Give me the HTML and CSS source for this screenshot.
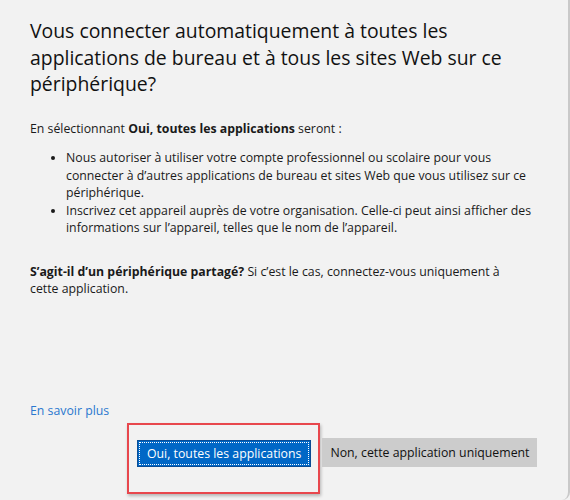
FILE: index.html
```html
<!doctype html>
<html lang="fr">

<head>
    <meta charset="utf-8">
    <meta name="viewport" content="width=device-width, initial-scale=1">
    <title>Connexion automatique</title>
    <link rel="stylesheet" href="styles.css">
</head>

<body>
    <div class="dialog">
        <h1 class="title">Vous connecter automatiquement à toutes les<br>applications de bureau et à tous les sites Web sur ce<br>périphérique?</h1>

        <p class="intro">En sélectionnant <b>Oui, toutes les applications</b> seront :</p>

        <ul class="points">
            <li>Nous autoriser à utiliser votre compte professionnel ou scolaire pour vous<br>connecter à d’autres applications de bureau et sites Web que vous utilisez sur ce<br>périphérique.</li>
            <li>Inscrivez cet appareil auprès de votre organisation. Celle-ci peut ainsi afficher des<br>informations sur l’appareil, telles que le nom de l’appareil.</li>
        </ul>

        <p class="shared"><b>S’agit-il d’un périphérique partagé?</b> Si c’est le cas, connectez-vous uniquement à<br>cette application.</p>

        <div class="spacer"></div>

        <a class="more" href="#">En savoir plus</a>

        <div class="actions">
            <div class="highlight">
                <button type="button" class="btn primary"><span class="focus">Oui, toutes les applications</span></button>
            </div>
            <button type="button" class="btn secondary">Non, cette application uniquement</button>
        </div>
    </div>
</body>

</html>
```
FILE: styles.css
```css
html, body {
    margin: 0;
    height: 100%;
}

body {
    background-color: #f2f2f2;
    font-family: "Open Sans", "Noto Sans", sans-serif;
    color: #1a1a1a;
}

.dialog {
    box-sizing: border-box;
    height: 500px;
    padding: 18px 0 0 30px;
    display: flex;
    flex-direction: column;
    border-right: 2px solid #c9c9c9;
    border-bottom-right-radius: 8px;
}

.title {
    margin: 0;
    font-size: 19.4px;
    font-weight: 400;
    line-height: 26.5px;
    color: #111;
    white-space: nowrap;
}

.intro,
.points,
.shared {
    font-size: 12.3px;
    line-height: 17.5px;
    white-space: nowrap;
}

.intro {
    margin: 22px 0 0 0;
}

.points {
    margin: 12px 0 0 0;
    padding: 0 0 0 36px;
}

.points li {
    margin: 0;
}

.shared {
    margin: 26px 0 0 0;
}

.spacer {
    flex: 1;
}

.more {
    font-size: 12.3px;
    line-height: 17px;
    color: #2a78cf;
    text-decoration: none;
    align-self: flex-start;
}

.actions {
    display: flex;
    align-items: flex-start;
    margin: 4px 0 6px 97px;
}

.highlight {
    padding: 15px 7px 25px 8px;
    border: 2px solid #e8474d;
    box-shadow: 1px 2px 3px rgba(0, 0, 0, 0.25);
}

.btn {
    font-family: inherit;
    font-size: 12.3px;
    margin: 0;
    cursor: pointer;
}

.primary {
    height: 27px;
    padding: 1px;
    background-color: #0067c6;
    border: 1px solid #0a4c94;
    color: #fff;
}

.focus {
    display: block;
    height: 100%;
    box-sizing: border-box;
    padding: 0 7px;
    line-height: 21px;
    border: 1px dotted #fff;
}

.secondary {
    height: 29px;
    margin-top: 15px;
    margin-left: 2px;
    padding: 0 8px;
    background-color: #cccccc;
    border: none;
    color: #111;
}
```
